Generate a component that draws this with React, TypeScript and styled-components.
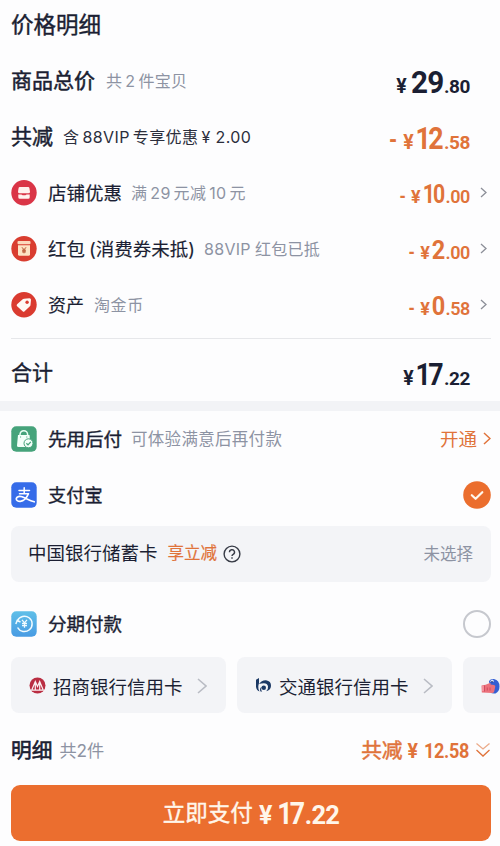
import React from "react";
import styled, { createGlobalStyle } from "styled-components";

const ink = "#1b1f33";
const gray = "#8d93a3";
const orange = "#e0733a";

const Global = createGlobalStyle`
  * { box-sizing: border-box; }
  html, body { margin: 0; padding: 0; background: #fdfdfe; }
  body { font-family: Inter, "Noto Sans CJK SC", sans-serif; color: ${ink}; overflow: hidden; }
  svg { display: block; flex: none; }
`;

const Page = styled.main`
  width: 500px;
  height: 846px;
  overflow: hidden;
  display: flex;
  flex-direction: column;
  background: #fdfdfe;
`;

const Row = styled.div<{ $h?: number; $top?: number; $bottom?: number }>`
  flex: none;
  height: ${(p) => p.$h ?? 56}px;
  padding: ${(p) => p.$top ?? 0}px 9px ${(p) => p.$bottom ?? 0}px 11px;
  display: flex;
  align-items: center;
  justify-content: space-between;
`;

const Side = styled.div<{ $gap?: number }>`
  display: flex;
  align-items: center;
  gap: ${(p) => p.$gap ?? 0}px;
`;

const Text = styled.span<{ $size: number; $color?: string; $ls?: number; $stroke?: number; $ml?: number; $drop?: number }>`
  font-size: ${(p) => p.$size}px;
  line-height: 1.4;
  white-space: nowrap;
  color: ${(p) => p.$color ?? ink};
  letter-spacing: ${(p) => p.$ls ?? 0}px;
  margin-left: ${(p) => p.$ml ?? 0}px;
  padding-top: ${(p) => p.$drop ?? 0}px;
  -webkit-text-stroke: ${(p) => p.$stroke ?? 0}px currentColor;
`;

const Num = styled.span<{ $l?: number; $r?: number }>`
  margin-left: ${(p) => p.$l ?? 0}px;
  margin-right: ${(p) => p.$r ?? 0}px;
`;

const PriceBox = styled.div<{ $color: string; $left?: number; $right?: number; $top: number }>`
  display: flex;
  align-items: baseline;
  font-family: Roboto, sans-serif;
  font-weight: 700;
  line-height: 1;
  color: ${(p) => p.$color};
  margin-left: ${(p) => p.$left ?? 0}px;
  margin-right: ${(p) => p.$right ?? 0}px;
  padding-top: ${(p) => p.$top}px;
`;

const Part = styled.span<{ $size: number; $ls?: number; $l?: number; $r?: number; $w?: number; $sx?: number }>`
  display: inline-block;
  font-size: ${(p) => p.$size}px;
  font-weight: ${(p) => p.$w ?? 700};
  letter-spacing: ${(p) => p.$ls ?? 0}px;
  margin-left: ${(p) => p.$l ?? 0}px;
  margin-right: ${(p) => p.$r ?? 0}px;
  transform: scaleX(${(p) => p.$sx ?? 1});
  transform-origin: right;
`;

const Divider = styled.div`
  flex: none;
  height: 1px;
  margin: 5px 9px 0 11px;
  background: #e6e7ea;
`;

const Band = styled.div`
  flex: none;
  height: 10px;
  background: #f2f3f6;
`;

const BankCard = styled.div`
  flex: none;
  height: 56px;
  margin: 3px 9px 0 11px;
  padding: 0 18px 0 17px;
  border-radius: 8px;
  background: #f3f4f7;
  display: flex;
  align-items: center;
  justify-content: space-between;
`;

const CardStrip = styled.div`
  flex: none;
  display: flex;
  gap: 11px;
  margin-top: 5px;
  padding-left: 11px;
  overflow: hidden;
`;

const CreditCard = styled.div`
  flex: none;
  width: 215px;
  height: 56px;
  padding: 2px 19px 0 18px;
  border-radius: 8px;
  background: #f3f4f7;
  display: flex;
  align-items: center;
  justify-content: space-between;
`;

const Spacer = styled.div<{ $h: number }>`
  flex: none;
  height: ${(p) => p.$h}px;
`;

const Radio = styled.span`
  width: 28px;
  height: 28px;
  border-radius: 50%;
  border: 2.5px solid #c6c8ce;
`;

const PayButton = styled.button`
  flex: none;
  height: 56px;
  margin: 7px 9px 0 11px;
  padding: 0;
  border: 0;
  border-radius: 9px;
  background: #eb6e2f;
  color: #fff6ea;
  font-family: inherit;
  display: flex;
  align-items: center;
  justify-content: center;
`;

function Price({ big, cents, large, minus, color = orange, arrow }: {
  big: string; cents: string; large?: boolean; minus?: boolean; color?: string; arrow?: boolean;
}) {
  const narrow = big.startsWith("1");
  const spacing = narrow ? (large ? -3 : -2.2) : -0.8;
  const pull = narrow ? (large ? -6 : -4.5) : large ? -2 : -2.5;
  return (
    <Side>
      <PriceBox $color={color} $right={arrow ? 10 : 21} $top={large ? 4 : 3}>
        {minus && <Part $size={large ? 26 : 20} $r={large ? 6 : 5} $sx={0.8}>-</Part>}
        <Part $size={large ? 19.5 : 18} $r={narrow ? 3 : 4}>¥</Part>
        <Part $size={large ? 31.5 : 25} $ls={spacing} $l={pull} $r={-spacing - (narrow ? 0 : 0.3)} $sx={narrow ? 0.85 : 0.94}>{big}</Part>
        <Part $size={large ? 19 : 18} $w={large ? 700 : 600} $ls={-0.4}>{cents}</Part>
      </PriceBox>
      {arrow && (
        <ArrowSlot>
          <Chevron w={7} h={11} color="#8c8f98" sw={1.3} />
        </ArrowSlot>
      )}
    </Side>
  );
}

const ArrowSlot = styled.span`
  padding: 0 4px 2px 0;
`;

function Chevron({ w, h, color, sw }: { w: number; h: number; color: string; sw: number }) {
  return (
    <svg width={w} height={h} viewBox={`0 0 ${w} ${h}`} fill="none" stroke={color} strokeWidth={sw}>
      <path d={`M1 1 L${w - 1} ${h / 2} L1 ${h - 1}`} />
    </svg>
  );
}

const StoreIcon = () => (
  <svg width="26" height="26" viewBox="0 0 26 26">
    <circle cx="13" cy="12.700" r="12.700" fill="#da3547" />
    <path d="M8.800 7h8.400q1 0 1.200 1l.6 3.700q0 1.600-1.600 1.600H8.600q-1.600 0-1.600-1.600L7.600 8q.2-1 1.200-1z" fill="#fff1ee" />
    <path d="M7.300 14.500h3q2.700 1.700 5.400 0h3v2.700q0 1.500-1.500 1.500H8.800q-1.500 0-1.500-1.500z" fill="#fff1ee" />
  </svg>
);

const PacketIcon = () => (
  <svg width="26" height="26" viewBox="0 0 26 26">
    <circle cx="13" cy="12.700" r="12.700" fill="#d93d30" />
    <rect x="6.500" y="5" width="13" height="3.300" rx="1" fill="#fbd9bd" />
    <path d="M7 9.300h12v9q0 1.500-1.500 1.500h-9q-1.500 0-1.500-1.500z" fill="#fde3c4" />
    <path d="M11 11.300l2 2.500 2-2.500M13 13.800v3.500M11 14.200h4M11 15.900h4" stroke="#b5502f" strokeWidth="1" fill="none" />
  </svg>
);

const TagIcon = () => (
  <svg width="26" height="26" viewBox="0 0 26 26">
    <circle cx="13" cy="12.700" r="12.700" fill="#da3b30" />
    <path d="M13 6.700l5.500-.5q1.500 0 1.500 1.500l-.5 5.300q-.1.700-.6 1.200l-5.300 5q-1 1-2 0l-5.500-5q-1-1 0-2l5.600-4.900q.5-.5 1.300-.6z" fill="#fff8f5" />
    <circle cx="16.100" cy="10.200" r="1.700" fill="#da3b30" />
  </svg>
);

const BagIcon = () => (
  <svg width="26" height="26" viewBox="0 0 26 26">
    <rect x=".3" y=".3" width="25.400" height="25.400" rx="5" fill="#46a37b" />
    <path d="M9 10V8.500a3.800 3.800 0 0 1 7.600 0V10" fill="none" stroke="#e9fff4" strokeWidth="1.500" />
    <path d="M7 9h11.500l1 10.500q0 1.500-1.500 1.500H7.500q-1.500 0-1.500-1.500z" fill="#f3fff9" />
    <path d="M9.600 10.500v1M15.800 10.500v1" stroke="#46a37b" />
    <circle cx="17.500" cy="17.300" r="4.500" fill="#f3fff9" stroke="#46a37b" />
    <path d="M15.400 17.300l1.600 1.600 2.800-3" fill="none" stroke="#46a37b" strokeWidth="1.300" />
  </svg>
);

const AlipayIcon = () => (
  <svg width="26" height="26" viewBox="0 0 26 26" fill="none" stroke="#fff" strokeLinecap="round">
    <rect x=".3" y=".3" width="25.400" height="25.400" rx="5" fill="#366ce9" stroke="none" />
    <path d="M8 8.500h10.500M13.200 5.800v5.500M8.500 11.700h9" strokeWidth="1.500" />
    <path d="M17.300 11.900c-1.300 3.500-4.500 7.300-8 7.400-2.500.1-4.300-1-4-2.800.4-2 3.300-2.600 5.800-1.700 3.600 1.300 7.400 3.800 12.100 5" strokeWidth="1.700" />
  </svg>
);

const InstallmentIcon = () => (
  <svg width="26" height="26" viewBox="0 0 26 26" fill="none" stroke="#f1fbff" strokeWidth="1.500">
    <defs>
      <linearGradient id="installment" x1="0" y1="0" x2="0" y2="1">
        <stop stopColor="#5fbfe8" />
        <stop offset="1" stopColor="#489be3" />
      </linearGradient>
    </defs>
    <rect x=".3" y=".3" width="25.400" height="25.400" rx="5" fill="url(#installment)" stroke="none" />
    <path d="M6.400 9.700a7.700 7.700 0 1 1 .2 6.800" />
    <path d="M4.800 13l1.400-3.500 3.300 1.500" />
    <path d="M11 8.800l2.500 3 2.500-3M13.500 11.800v5M11 12.400h5M11 14.500h5" strokeWidth="1.300" />
  </svg>
);

const CheckIcon = () => (
  <svg width="28" height="28" viewBox="0 0 28 28">
    <circle cx="14" cy="14" r="13.800" fill="#eb6e2e" />
    <path d="M8.800 14.200l3.800 3.600 6.700-6.600" fill="none" stroke="#fff7ed" strokeWidth="2.200" strokeLinecap="round" strokeLinejoin="round" />
  </svg>
);

const HelpIcon = () => (
  <svg width="18" height="18" viewBox="0 0 18 18" fill="none" stroke="#363a45" strokeWidth="1.400">
    <circle cx="9" cy="9" r="7.900" />
    <path d="M6.500 7.300a2.500 2.500 0 1 1 3.700 2.100q-1.200.7-1.200 1.700" />
    <path d="M9 12.200v1.500" />
  </svg>
);

const CmbLogo = () => (
  <svg width="17" height="17" viewBox="0 0 17 17">
    <circle cx="8.500" cy="8.500" r="8" fill="#b92d42" />
    <path d="M3 12.500L6.300 4.500l2.200 5 2.200-5 3.300 8M6.300 7v5.500M10.700 7v5.500M1.500 13.200h14" fill="none" stroke="#fbeff1" strokeWidth="1.200" />
  </svg>
);

const BocomLogo = () => (
  <svg width="17" height="17" viewBox="0 0 17 17">
    <path d="M4 1L1 2.700v7q.3 3.500 3.500 4.800Q3 11.800 3.300 9L4 6z" fill="#1b3864" />
    <path d="M4 7Q6.500 3 11 3.200q5.200.8 5 5.800-.4 4.300-4.800 5.300 2.300-2.500 1.800-5.100Q12.300 6.200 9 6.200 6 6.200 4 7z" fill="#1b3864" />
    <circle cx="8.800" cy="10.700" r="2.200" fill="#1b3864" />
    <path d="M6.600 10.500q-1 2 .6 4H5.500q-1.300-2.800 1.100-5z" fill="#1b3864" />
  </svg>
);

const MascotLogo = () => (
  <svg width="19" height="17" viewBox="0 0 19 17">
    <path d="M8 3Q9.500.6 13 1q5.500 1.200 5.500 7.500 0 5-4 7-4 .5-5-1.500z" fill="#345fd3" />
    <path d="M9 3.800q1-2.500 2.700-2t.8 2.200" fill="#dce9ff" />
    <circle cx="11" cy="3.700" r=".8" fill="#202a60" />
    <path d="M.5 7.500l4-.8 3.800-1.500q2-.5 1.200 1.400l3.500.3q1.800.4 1.200 2l-1 4.500q-.5 1.500-2 1.500L.8 14.500z" fill="#eb717c" />
    <path d="M3.500 7.500v6M6.300 9.500v3M9 9.500v3" stroke="#d0465c" strokeWidth=".9" />
    <path d="M2 8v5" stroke="#ffc5cb" strokeWidth=".8" />
  </svg>
);

const DoubleDown = () => (
  <svg width="16" height="16" viewBox="0 0 16 16" fill="none" stroke={orange} strokeWidth="1.300">
    <path d="M1.500 1.500L8 7l6.500-5.500" opacity=".6" />
    <path d="M1.500 8L8 14l6.500-6" />
  </svg>
);

export default function App() {
  return (
    <Page>
      <Global />
      <Row $h={53} $bottom={4}>
        <Text $size={22.5} $stroke={0.4}>价格明细</Text>
      </Row>
      <Row>
        <Side>
          <Text $size={21} $stroke={0.5}>商品总价</Text>
          <Text $size={16} $color={gray} $ml={11} $ls={0.3}>共<Num $l={3} $r={3}>2</Num>件宝贝</Text>
        </Side>
        <Price big="29" cents=".80" large color={ink} />
      </Row>
      <Row>
        <Side>
          <Text $size={21} $stroke={0.5}>共减</Text>
          <Text $size={16} $ml={10} $color="#2b2e3c" $ls={0.4}>含<Num $l={3} $r={3}>88VIP</Num>专享优惠<Num $l={3} $r={5}>¥</Num><Num>2.00</Num></Text>
        </Side>
        <Price big="12" cents=".58" large minus />
      </Row>
      <Row>
        <Side>
          <StoreIcon />
          <Text $size={18.5} $ml={11} $stroke={0.2} $drop={1}>店铺优惠</Text>
          <Text $size={16} $color={gray} $ml={9} $ls={0.3}>满<Num $l={3} $r={3}>29</Num>元减<Num $l={3} $r={3}>10</Num>元</Text>
        </Side>
        <Price big="10" cents=".00" minus arrow />
      </Row>
      <Row>
        <Side>
          <PacketIcon />
          <Text $size={18.5} $ml={11} $stroke={0.15} $drop={1}>红包<Num $l={4}>(</Num>消费券未抵<Num>)</Num></Text>
          <Text $size={16} $color={gray} $ml={9} $ls={0.3}><Num $r={4}>88VIP</Num>红包已抵</Text>
        </Side>
        <Price big="2" cents=".00" minus arrow />
      </Row>
      <Row>
        <Side>
          <TagIcon />
          <Text $size={18} $ml={11} $stroke={0.15} $drop={1}>资产</Text>
          <Text $size={16} $color={gray} $ml={10} $ls={0.6}>淘金币</Text>
        </Side>
        <Price big="0" cents=".58" minus arrow />
      </Row>
      <Divider />
      <Row $h={62} $top={5}>
        <Text $size={21} $stroke={0.4}>合计</Text>
        <Price big="17" cents=".22" large color={ink} />
      </Row>
      <Band />
      <Row>
        <Side>
          <BagIcon />
          <Text $size={18.5} $ml={11} $stroke={0.4} $drop={2}>先用后付</Text>
          <Text $size={16.5} $color={gray} $ml={9} $ls={0.3} $drop={2}>可体验满意后再付款</Text>
        </Side>
        <Side $gap={6}>
          <Text $size={18.5} $color={orange} $drop={2}>开通</Text>
          <Chevron w={8} h={13} color={orange} sw={1.5} />
        </Side>
      </Row>
      <Row>
        <Side>
          <AlipayIcon />
          <Text $size={18.2} $ml={11} $stroke={0.35} $drop={2}>支付宝</Text>
        </Side>
        <CheckIcon />
      </Row>
      <BankCard>
        <Side $gap={6}>
          <Side>
            <Text $size={18.5}>中国银行储蓄卡</Text>
            <Text $size={16.5} $color={orange} $ml={10} $stroke={0.2}>享立减</Text>
          </Side>
          <HelpIcon />
        </Side>
        <Text $size={16.5} $color={gray} $drop={2}>未选择</Text>
      </BankCard>
      <Spacer $h={14} />
      <Row>
        <Side>
          <InstallmentIcon />
          <Text $size={18.5} $ml={11} $stroke={0.35} $drop={2}>分期付款</Text>
        </Side>
        <Radio />
      </Row>
      <CardStrip>
        <CreditCard>
          <Side>
            <CmbLogo />
            <Text $size={18.5} $ml={7} $drop={3}>招商银行信用卡</Text>
          </Side>
          <Chevron w={10} h={16} color="#b9bcc4" sw={1.6} />
        </CreditCard>
        <CreditCard>
          <Side>
            <BocomLogo />
            <Text $size={18.5} $ml={7} $drop={3}>交通银行信用卡</Text>
          </Side>
          <Chevron w={10} h={16} color="#b9bcc4" sw={1.6} />
        </CreditCard>
        <CreditCard>
          <MascotLogo />
        </CreditCard>
      </CardStrip>
      <Spacer $h={9} />
      <Row>
        <Side>
          <Text $size={20.7} $stroke={0.6} $drop={2}>明细</Text>
          <Text $size={17.2} $color={gray} $ml={7} $drop={2}>共2件</Text>
        </Side>
        <Side>
          <Text $size={20.7} $color={orange} $stroke={0.5} $drop={2}>共减</Text>
          <PriceBox $color={orange} $left={5} $right={6} $top={2}>
            <Part $size={19.500} $r={2}>¥</Part>
            <Part $size={20.500} $ls={-0.4} $l={-2} $sx={0.88}>12.58</Part>
          </PriceBox>
          <DoubleDown />
        </Side>
      </Row>
      <PayButton>
        <Text $size={22.5} $color="#fff6ea" $stroke={0.4}>立即支付</Text>
        <PriceBox $color="#fff6ea" $left={6} $top={1}>
          <Part $size={25} $r={2}>¥</Part>
          <Part $size={31} $ls={-3} $l={-1.5} $r={2.5} $sx={0.86}>17</Part>
          <Part $size={25.500} $ls={-0.8}>.22</Part>
        </PriceBox>
      </PayButton>
    </Page>
  );
}
